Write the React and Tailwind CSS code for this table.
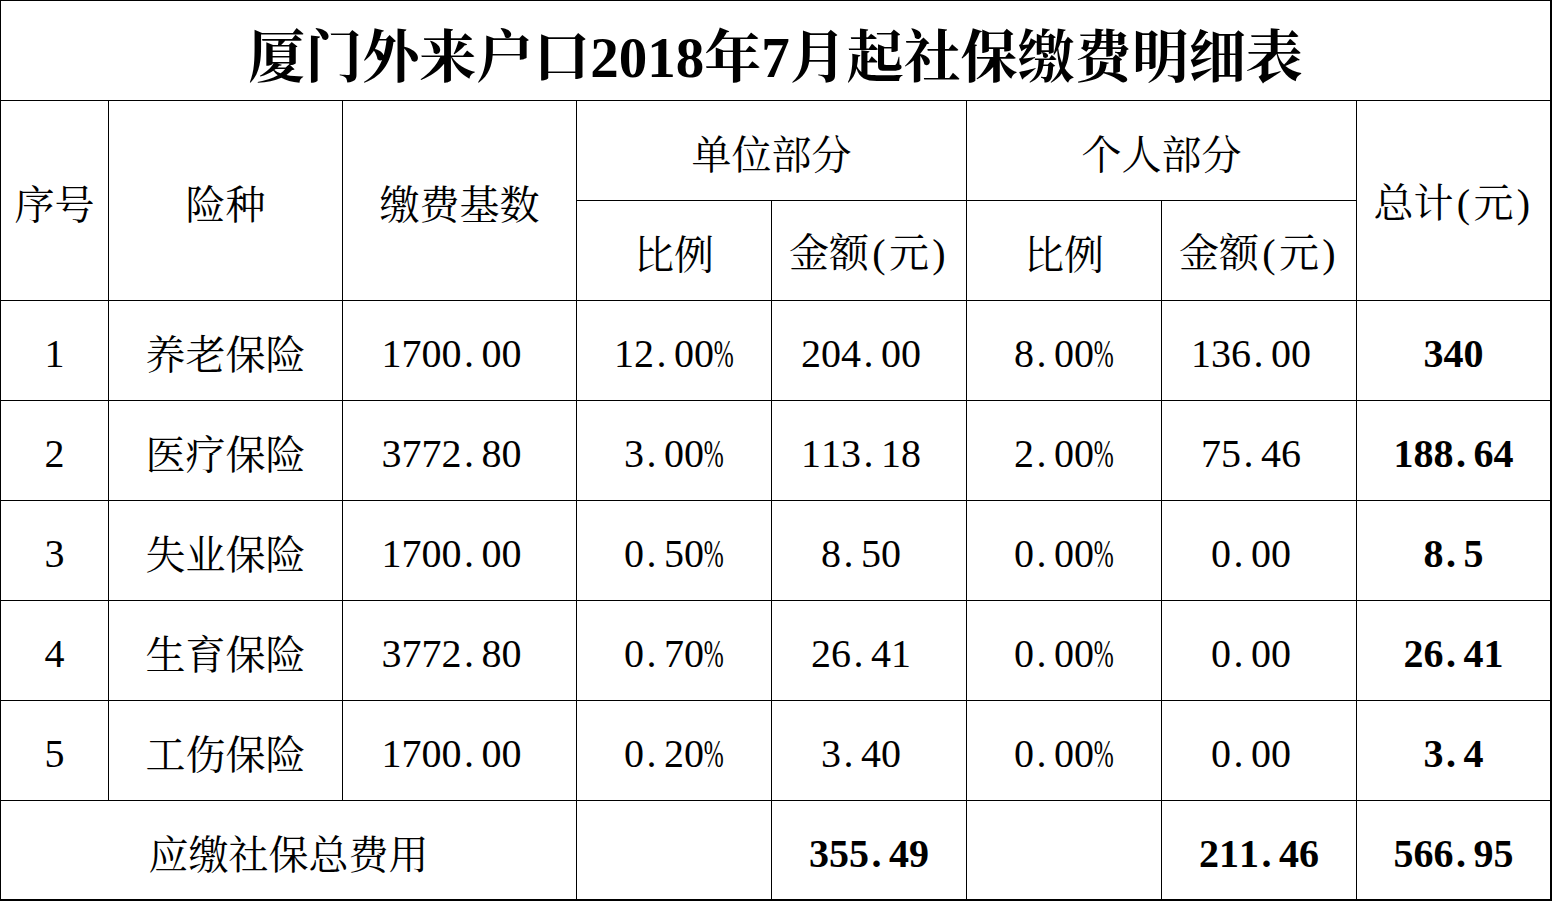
import React from "react";

const CJK = "font-['Noto_Serif_CJK_SC','Noto_Sans_CJK_SC',serif]";

function T({ s }) {
  const parts = [];
  for (let i = 0; i < s.length; i++) {
    const c = s[i];
    if (c.charCodeAt(0) < 128) {
      if (c === ".") {
        parts.push(
          <span key={i} className="inline-block w-[0.5em] text-left pl-[0.06em] font-['Liberation_Serif',serif]">
            {c}
          </span>
        );
      } else if (c === "%") {
        parts.push(
          <span key={i} className="inline-flex w-[0.5em] justify-center font-['Liberation_Serif',serif]">
            <span className="inline-block scale-x-[0.6]">{c}</span>
          </span>
        );
      } else {
        parts.push(
          <span key={i} className="inline-block w-[0.5em] text-center font-['Liberation_Serif',serif]">
            {c}
          </span>
        );
      }
    } else {
      parts.push(<span key={i}>{c}</span>);
    }
  }
  return <span className="whitespace-nowrap">{parts}</span>;
}

const base = "flex items-center justify-center border-black text-[40px] leading-none text-black pt-[3px]";

function Cell({ children, className = "", last = false, bottom = false }) {
  return (
    <div className={`${base} ${last ? "" : "border-r"} ${bottom ? "" : "border-b"} ${className}`}>
      {children}
    </div>
  );
}

const rows = [
  ["1", "养老保险", "1700.00", "12.00%", "204.00", "8.00%", "136.00", "340"],
  ["2", "医疗保险", "3772.80", "3.00%", "113.18", "2.00%", "75.46", "188.64"],
  ["3", "失业保险", "1700.00", "0.50%", "8.50", "0.00%", "0.00", "8.5"],
  ["4", "生育保险", "3772.80", "0.70%", "26.41", "0.00%", "0.00", "26.41"],
  ["5", "工伤保险", "1700.00", "0.20%", "3.40", "0.00%", "0.00", "3.4"],
];

export default function App() {
  return (
    <div className={`w-[1552px] h-[901px] bg-white border-l border-t border-r-2 border-b-2 border-black ${CJK}`}>
      <div className="grid grid-cols-[108px_234px_234px_195px_195px_195px_195px_193px] grid-rows-[100px_100px_100px_100px_100px_100px_100px_100px_98px] w-full h-full">
        <div className="col-span-8 flex items-center justify-center border-b border-black text-[57px] leading-none font-bold text-black pt-[9px]">
          <T s="厦门外来户口2018年7月起社保缴费明细表" />
        </div>

        <Cell className="row-span-2"><T s="序号" /></Cell>
        <Cell className="row-span-2"><T s="险种" /></Cell>
        <Cell className="row-span-2"><T s="缴费基数" /></Cell>
        <Cell className="col-span-2"><T s="单位部分" /></Cell>
        <Cell className="col-span-2"><T s="个人部分" /></Cell>
        <Cell className="row-span-2" last><T s="总计(元)" /></Cell>
        <Cell><T s="比例" /></Cell>
        <Cell><T s="金额(元)" /></Cell>
        <Cell><T s="比例" /></Cell>
        <Cell><T s="金额(元)" /></Cell>

        {rows.map((r) => (
          <React.Fragment key={r[0]}>
            <Cell><T s={r[0]} /></Cell>
            <Cell><T s={r[1]} /></Cell>
            <Cell className="pr-4"><T s={r[2]} /></Cell>
            <Cell><T s={r[3]} /></Cell>
            <Cell className="pr-4"><T s={r[4]} /></Cell>
            <Cell><T s={r[5]} /></Cell>
            <Cell className="pr-4"><T s={r[6]} /></Cell>
            <Cell className="font-bold" last><T s={r[7]} /></Cell>
          </React.Fragment>
        ))}

        <Cell className="col-span-3" bottom><T s="应缴社保总费用" /></Cell>
        <Cell bottom></Cell>
        <Cell className="font-bold" bottom><T s="355.49" /></Cell>
        <Cell bottom></Cell>
        <Cell className="font-bold" bottom><T s="211.46" /></Cell>
        <Cell className="font-bold" last bottom><T s="566.95" /></Cell>
      </div>
    </div>
  );
}
